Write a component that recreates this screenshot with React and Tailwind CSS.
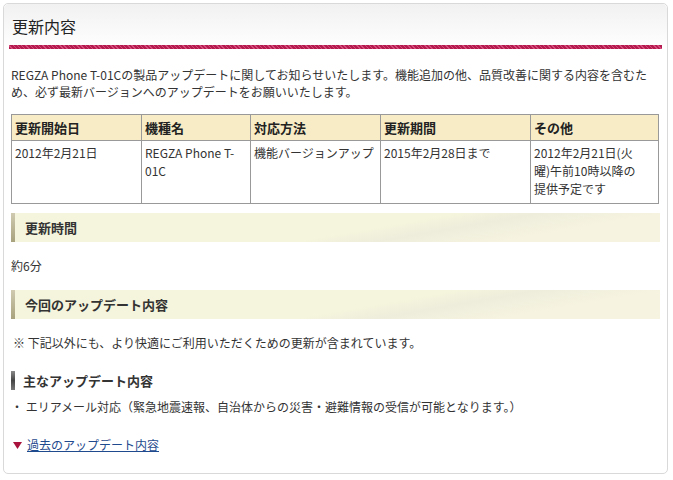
import React from "react";

const font = { fontFamily: '"Noto Sans CJK JP", "Liberation Sans", sans-serif' };

function SectionHead({ children }) {
  return (
    <div className="flex h-[29px] items-stretch bg-[linear-gradient(170deg,#f5f4dc_55%,#eeeddc_65%,#f6f4e0_80%)]">
      <div className="w-[4px] bg-[linear-gradient(to_bottom,#cfcab0,#a9a27e)]" />
      <div className="flex items-center pl-[10px] text-[13px] font-bold text-[#333]">
        {children}
      </div>
    </div>
  );
}

export default function App() {
  const cols = [
    { label: "更新開始日", w: "w-[130px]" },
    { label: "機種名", w: "w-[109px]" },
    { label: "対応方法", w: "w-[130px]" },
    { label: "更新期間", w: "w-[150px]" },
    { label: "その他", w: "" },
  ];

  return (
    <div className="h-[480px] w-[673px] bg-white p-[3px] pr-[5px]" style={font}>
      <div className="h-[471px] rounded-[5px] border border-[#d9d9d9] bg-white text-[12px] leading-[18px] text-[#333]">
        <header className="rounded-t-[5px] bg-[linear-gradient(to_bottom,#f1f1f1,#ffffff)] px-[5px] pt-[10px]">
          <h1 className="pl-[3px] text-[16px] leading-[24px] font-normal text-[#222]">更新内容</h1>
          <div className="mt-[7px] h-[4px] bg-[repeating-linear-gradient(45deg,#b51a4f_0px,#b51a4f_2px,#d44a7a_2px,#d44a7a_3px)]" />
        </header>

        <div className="px-[7px] pt-[17px]">
          <p className="leading-[17px]">
            REGZA Phone T-01Cの製品アップデートに関してお知らせいたします。機能追加の他、品質改善に関する内容を含むた
            <br />
            め、必ず最新バージョンへのアップデートをお願いいたします。
          </p>

          <table className="mt-[14px] w-[648px] border-collapse">
            <thead>
              <tr className="bg-[#f7ecc6]">
                {cols.map((c) => (
                  <th
                    key={c.label}
                    className={`${c.w} h-[26px] border border-[#999] px-[3px] text-left align-middle text-[13px] font-bold text-[#222]`}
                  >
                    {c.label}
                  </th>
                ))}
              </tr>
            </thead>
            <tbody>
              <tr className="h-[63px]">
                <td className="border border-[#999] px-[3px] pt-[3px] align-top">2012年2月21日</td>
                <td className="border border-[#999] px-[3px] pt-[3px] align-top">
                  REGZA Phone T-
                  <br />
                  01C
                </td>
                <td className="border border-[#999] px-[3px] pt-[3px] align-top">機能バージョンアップ</td>
                <td className="border border-[#999] px-[3px] pt-[3px] align-top">2015年2月28日まで</td>
                <td className="border border-[#999] px-[3px] pt-[3px] align-top">
                  2012年2月21日(火
                  <br />
                  曜)午前10時以降の
                  <br />
                  提供予定です
                </td>
              </tr>
            </tbody>
          </table>

          <div className="mt-[9px]">
            <SectionHead>更新時間</SectionHead>
          </div>
          <p className="mt-[15px]">約6分</p>

          <div className="mt-[15px]">
            <SectionHead>今回のアップデート内容</SectionHead>
          </div>
          <p className="mt-[15px] pl-[2px]">※ 下記以外にも、より快適にご利用いただくための更新が含まれています。</p>

          <div className="mt-[19px] flex h-[19px] items-center gap-[8px]">
            <div className="h-[19px] w-[4px] bg-[linear-gradient(to_bottom,#8a8a8a,#444,#777)]" />
            <span className="text-[13px] font-bold text-[#333]">主なアップデート内容</span>
          </div>
          <p className="mt-[8px]">・ エリアメール対応（緊急地震速報、自治体からの災害・避難情報の受信が可能となります。）</p>

          <div className="mt-[20px] flex items-center gap-[5px] pl-[2px]">
            <svg width="9" height="7" viewBox="0 0 9 7">
              <polygon points="0,0 9,0 4.5,7" fill="#a8123c" />
            </svg>
            <a href="#" className="text-[#1f4b8e] underline">過去のアップデート内容</a>
          </div>
        </div>
      </div>
    </div>
  );
}
